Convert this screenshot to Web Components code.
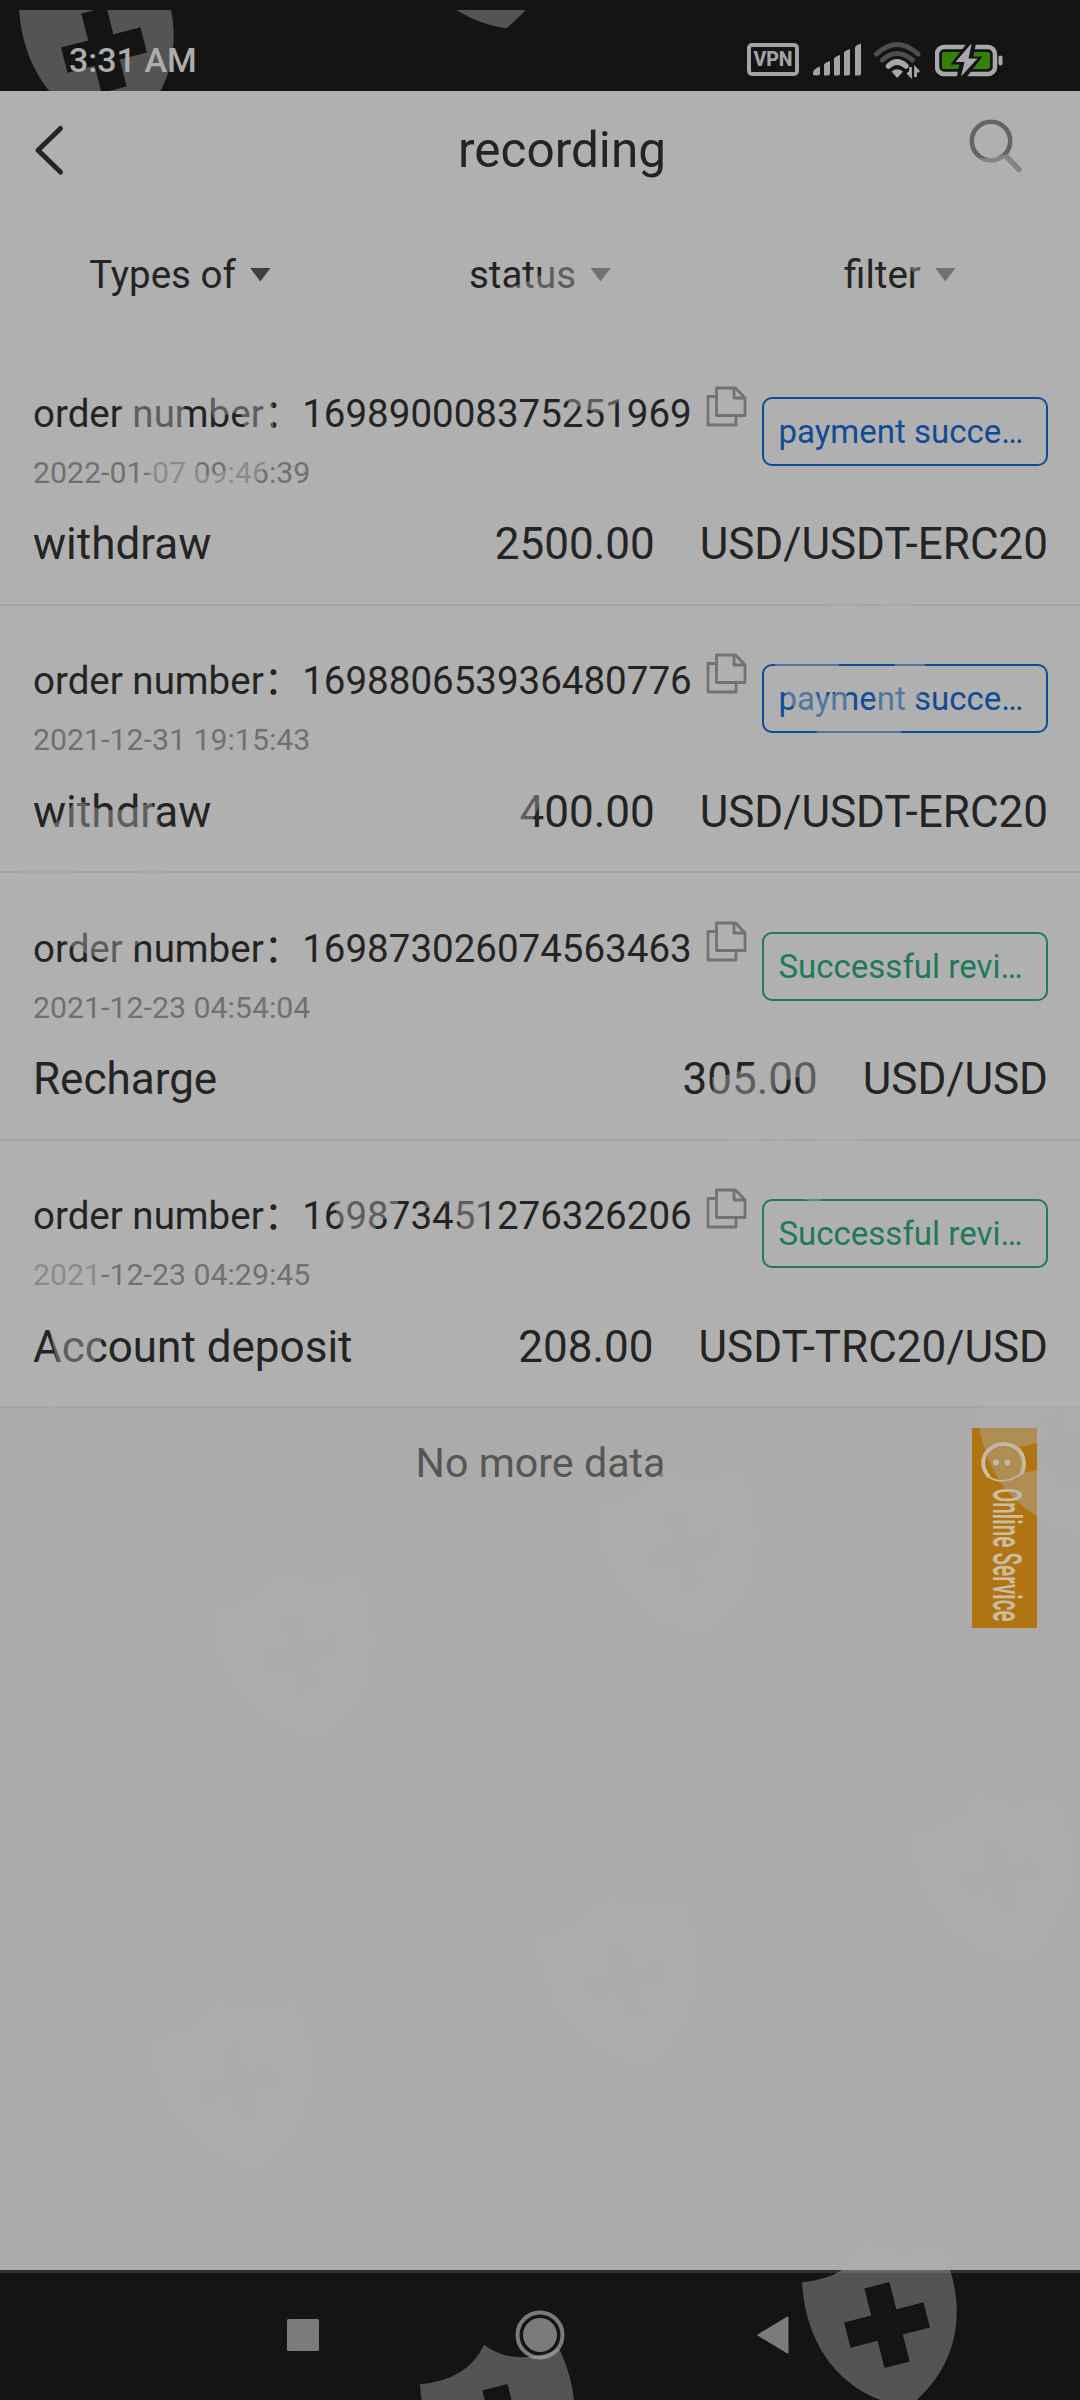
<!DOCTYPE html>
<html lang="en">
<head>
<meta charset="utf-8">
<meta name="viewport" content="width=device-width, initial-scale=1">
<title>recording</title>
<style>
    html, body {
        margin: 0;
        padding: 0;
        background: #ababab;
    }

    body {
        font-family: Roboto, "Noto Sans CJK SC", sans-serif;
    }
</style>
</head>
<body>
<record-screen>
    <status-bar slot="top" time="3:31 AM"></status-bar>
    <nav-header slot="top">recording</nav-header>
    <filter-bar slot="top">
        <filter-item tone="#3f3f3f">Types of</filter-item>
        <filter-item>status</filter-item>
        <filter-item>filter</filter-item>
    </filter-bar>

    <record-row number="169890008375251969" date="2022-01-07 09:46:39" kind="withdraw" amount="2500.00" pair="USD/USDT-ERC20">
        <status-badge slot="badge">payment succe…</status-badge>
    </record-row>
    <record-row number="169880653936480776" date="2021-12-31 19:15:43" kind="withdraw" amount="400.00" pair="USD/USDT-ERC20">
        <status-badge slot="badge">payment succe…</status-badge>
    </record-row>
    <record-row number="169873026074563463" date="2021-12-23 04:54:04" kind="Recharge" amount="305.00" pair="USD/USD">
        <status-badge slot="badge" type="success">Successful revi…</status-badge>
    </record-row>
    <record-row number="169873451276326206" date="2021-12-23 04:29:45" kind="Account deposit" amount="208.00" pair="USDT-TRC20/USD">
        <status-badge slot="badge" type="success">Successful revi…</status-badge>
    </record-row>

    <list-end slot="end">No more data</list-end>
    <system-nav slot="bottom"></system-nav>
    <online-service slot="float">Online Service</online-service>
    <shield-layer slot="float"></shield-layer>
</record-screen>

<script>
/**
 * Base class, attaches an open shadow root and renders once connected.
 */
class BaseElement extends HTMLElement {
    constructor() {
        super();
        this.attachShadow({ mode: 'open' });
    }

    connectedCallback() {
        this.shadowRoot.innerHTML = this.template();
    }

    template() {
        return '<slot></slot>';
    }
}

/**
 * Whole phone screen: top bars, list, bottom navigation, floating layers.
 */
class RecordScreen extends BaseElement {
    template() {
        return `
            <style>
                :host {
                    position: relative;
                    display: flex;
                    flex-direction: column;
                    width: 1080px;
                    height: 2400px;
                    overflow: hidden;
                    background: #ababab;
                }

                .panel {
                    background: #b0b0b0;
                }

                .rest {
                    flex: 1;
                }
            </style>
            <div class="panel">
                <slot name="top"></slot>
                <slot></slot>
            </div>
            <div class="rest"><slot name="end"></slot></div>
            <slot name="bottom"></slot>
            <slot name="float"></slot>
        `;
    }
}

/**
 * Android status bar.
 */
class StatusBar extends BaseElement {
    template() {
        return `
            <style>
                :host {
                    display: flex;
                    align-items: center;
                    justify-content: space-between;
                    box-sizing: border-box;
                    height: 91px;
                    padding: 28px 77px 0 69px;
                    background: #141414;
                    color: #acacac;
                }

                .time {
                    font-size: 34px;
                    font-weight: 500;
                    line-height: 40px;
                }

                .icons {
                    display: flex;
                    align-items: center;
                }

                .vpn {
                    box-sizing: border-box;
                    width: 52px;
                    height: 33px;
                    margin-right: 14px;
                    border: 4px solid #a3a3a6;
                    border-radius: 5px;
                    color: #a3a3a6;
                    font-size: 19.5px;
                    font-weight: 800;
                    line-height: 25px;
                    text-align: center;
                }

                .signal { margin-right: 12px; }
                .wifi { margin-right: 14px; }
                svg { display: block; }
            </style>
            <span class="time">${this.getAttribute('time')}</span>
            <div class="icons">
                <span class="vpn">VPN</span>
                <svg class="signal" width="49" height="34" viewBox="0 0 49 34" fill="#a3a3a6">
                    <path d="M0 32v-2q0-4 7-6.500v7q0 2-2 2z"/>
                    <path d="M11 32.500V22q0-2 6-4v12.500q0 2-2 2z"/>
                    <path d="M21 32.500V16q0-2 6-4v18.500q0 2-2 2z"/>
                    <path d="M31 32.500V10q0-2 6-4v24.500q0 2-2 2z"/>
                    <path d="M42 32.500V4.500q0-2 6-4v30q0 2-2 2z"/>
                </svg>
                <svg class="wifi" width="47" height="38" viewBox="0 0 47 38" fill="none">
                    <path d="M2.500 13Q23-6 44 13" stroke="#4e4e4e" stroke-width="5" stroke-linecap="round"/>
                    <path d="M8.500 19Q23 6 38.500 19" stroke="#4e4e4e" stroke-width="5" stroke-linecap="round"/>
                    <path d="M14.500 25Q23 17 32 25" stroke="#a8a8ab" stroke-width="5.500" stroke-linecap="round"/>
                    <path d="M17.500 30.500q5.500-4.500 11.500 0l-5.800 6.500z" fill="#a8a8ab"/>
                    <path d="M36.500 26v8.500l-3-3M41.500 36v-8.500l3.500 3.500" stroke="#a8a8ab" stroke-width="2.800"/>
                </svg>
                <svg width="68" height="38" viewBox="0 0 68 38">
                    <rect x="2" y="6" width="58" height="27" rx="7" fill="none" stroke="#a9a9ac" stroke-width="4.500"/>
                    <rect x="7" y="11" width="48" height="17" rx="2" fill="#348108"/>
                    <rect x="63.500" y="14.500" width="4" height="10" rx="2" fill="#a9a9ac"/>
                    <path d="M32 2L15.500 23.500H24.500L21.500 37h9.500L47.500 15.500H38.500L41 2z" fill="#141414"/>
                    <path d="M35.500 3.500L20.500 21H29.500L26 35.500L42.500 17.500H33.500L36.500 3.500z" fill="#a9a9ac"/>
                </svg>
            </div>
        `;
    }
}

/**
 * Page title with the back and search buttons.
 */
class NavHeader extends BaseElement {
    template() {
        return `
            <style>
                :host {
                    display: grid;
                    grid-template-columns: 120px 1fr 120px;
                    align-items: center;
                    height: 119px;
                    color: #242424;
                    font-size: 49.500px;
                    line-height: 60px;
                    text-align: center;
                }

                span {
                    padding: 0 0 1px 44px;
                }

                svg { display: block; }
            </style>
            <svg width="120" height="119" viewBox="0 91 120 119" fill="none" stroke="#242424" stroke-width="5" stroke-linecap="round" stroke-linejoin="round">
                <path d="M60.500 128.500L38 150.300l22.500 21.700"/>
            </svg>
            <span><slot></slot></span>
            <svg width="120" height="119" viewBox="960 91 120 119" fill="none" stroke="#646464">
                <circle cx="991" cy="141" r="19.200" stroke-width="4.600"/>
                <path d="M1005 155l14 14.500" stroke-width="5.500" stroke-linecap="round"/>
            </svg>
        `;
    }
}

class FilterBar extends BaseElement {
    template() {
        return `
            <style>
                :host {
                    display: grid;
                    grid-template-columns: repeat(3, 1fr);
                    height: 128px;
                }
            </style>
            <slot></slot>
        `;
    }
}

/**
 * One dropdown of the filter bar.
 */
class FilterItem extends BaseElement {
    template() {
        const tone = this.getAttribute('tone') || '#454545';
        return `
            <style>
                :host {
                    display: flex;
                    align-items: center;
                    justify-content: center;
                    gap: 14px;
                    height: 129px;
                    color: #242424;
                    font-size: 38.500px;
                    line-height: 50px;
                }

                i {
                    width: 21px;
                    height: 14px;
                    background: ${tone};
                    clip-path: polygon(0 0, 100% 0, 50% 100%);
                }
            </style>
            <span><slot></slot></span><i></i>
        `;
    }
}

/**
 * Outlined state label of a record.
 */
class StatusBadge extends BaseElement {
    template() {
        const color = this.getAttribute('type') === 'success' ? '#1f7a5a' : '#0f4c96';
        return `
            <style>
                :host {
                    display: block;
                    box-sizing: border-box;
                    width: 286px;
                    height: 69px;
                    padding-left: 14.500px;
                    border: 2px solid ${color};
                    border-radius: 10px;
                    color: ${color};
                    font-size: 33px;
                    line-height: 65px;
                    white-space: nowrap;
                }
            </style>
            <slot></slot>
        `;
    }
}

/**
 * One record of the list.
 */
class RecordRow extends BaseElement {
    template() {
        return `
            <style>
                :host {
                    display: block;
                    box-sizing: border-box;
                    height: 267.500px;
                    padding: 49.600px 32px 0 33px;
                    border-bottom: 2px solid #a3a3a3;
                    color: #242424;
                }

                .head, .foot, .number {
                    display: flex;
                }

                .head {
                    justify-content: space-between;
                    height: 126.500px;
                }

                .number {
                    font-size: 38.500px;
                    line-height: 52px;
                    white-space: nowrap;
                }

                .number svg {
                    margin: -2px 0 0 13px;
                }

                .date {
                    margin-top: 13px;
                    color: #707070;
                    font-size: 30.300px;
                    line-height: 40px;
                }

                ::slotted(status-badge) {
                    margin-top: 9px;
                }

                .foot {
                    font-size: 44px;
                    line-height: 60px;
                }

                .amount { margin-left: auto; }
                .pair { margin-left: 45px; }
            </style>
            <div class="head">
                <div>
                    <div class="number">
                        <span>order number：${this.getAttribute('number')}</span>
                        <svg width="42" height="42" viewBox="0 0 42 42" fill="none" stroke="#727272" stroke-width="2.800" stroke-linejoin="round">
                            <path d="M11 10.500H3v28.500h28v-9"/>
                            <path d="M11.500 2h19L40 12v17.500H11.500z"/>
                            <path d="M29 2.500V12h10.500"/>
                        </svg>
                    </div>
                    <div class="date">${this.getAttribute('date')}</div>
                </div>
                <slot name="badge"></slot>
            </div>
            <div class="foot">
                <span>${this.getAttribute('kind')}</span>
                <span class="amount">${this.getAttribute('amount')}</span>
                <span class="pair">${this.getAttribute('pair')}</span>
            </div>
        `;
    }
}

class ListEnd extends BaseElement {
    template() {
        return `
            <style>
                :host {
                    display: block;
                    padding: 30px 0 0 1px;
                    color: #565656;
                    font-size: 41.200px;
                    line-height: 50px;
                    text-align: center;
                }
            </style>
            <slot></slot>
        `;
    }
}

/**
 * Floating customer service tab.
 */
class OnlineService extends BaseElement {
    template() {
        return `
            <style>
                :host {
                    position: absolute;
                    left: 972px;
                    top: 1428px;
                    display: flex;
                    flex-direction: column;
                    align-items: center;
                    width: 65px;
                    height: 200px;
                    background: #b07412;
                    color: #cdbda0;
                }

                svg {
                    display: block;
                    flex: none;
                }

                /* condensed letters: small type stretched across the tab */
                span {
                    margin-left: 5px;
                    writing-mode: vertical-rl;
                    font-size: 20.500px;
                    font-weight: 600;
                    line-height: 26px;
                    letter-spacing: .1px;
                    white-space: nowrap;
                    transform: scaleX(1.95);
                }
            </style>
            <svg width="65" height="60" viewBox="0 0 65 60" fill="none" stroke="#cdbda0">
                <path d="M17 49Q8 38 13 27Q20 15 34 16Q51 19 52 35Q52 42 49 46" stroke-width="3.800"/>
                <path d="M17 49Q31 58 49 46" stroke-width="1.600"/>
                <circle cx="24" cy="34.500" r="3" fill="#cdbda0" stroke="none"/>
                <circle cx="35.500" cy="34.500" r="3" fill="#cdbda0" stroke="none"/>
            </svg>
            <span><slot></slot></span>
        `;
    }
}

/**
 * Android three-button navigation.
 */
class SystemNav extends BaseElement {
    template() {
        return `
            <style>
                :host {
                    display: flex;
                    align-items: center;
                    box-sizing: border-box;
                    height: 130px;
                    padding: 0 291px 3px 287px;
                    justify-content: space-between;
                    border-top: 3px solid #303030;
                    background: #141414;
                }

                .home { margin-left: 4px; }
            </style>
            <svg width="32" height="32"><rect width="32" height="32" rx="1.500" fill="#7b7b7b"/></svg>
            <svg class="home" width="50" height="50" viewBox="0 0 50 50">
                <circle cx="25" cy="25" r="22.500" fill="none" stroke="#7b7b7b" stroke-width="4"/>
                <circle cx="25" cy="25" r="17" fill="#7b7b7b"/>
            </svg>
            <svg width="32" height="38" viewBox="0 0 32 38">
                <path d="M1.500 19L30.500 1.500v35z" fill="#7b7b7b" stroke="#7b7b7b" stroke-width="2" stroke-linejoin="round"/>
            </svg>
        `;
    }
}

/**
 * Translucent shields scattered over the screen.
 */
class ShieldLayer extends BaseElement {
    template() {
        const points = [
            [104, 50], [485, -54],
            [204, 434], [584, 331], [965, 228],
            [97, 880], [477, 777], [855, 675],
            [35, 1327], [417, 1224], [797, 1120],
            [300, 1654], [684, 1551], [1062, 1450],
            [239, 2083], [625, 1980], [1000, 1877],
            [127, 2529], [505, 2427], [887, 2325]
        ];
        const shield = `
            M0-85Q24-55 71.800-62.500C84 0 62 58 0 85C-62 58-84 0-71.800-62.500Q-24-55 0-85Z
            M-13-41H13V-13H41V13H13V41H-13V13H-41V-13H-13Z`;
        const marks = points.map(([x, y]) =>
            `<path transform="translate(${x} ${y}) rotate(-14.300)" d="${shield}"/>`).join('');
        return `
            <style>
                :host {
                    position: absolute;
                    left: 0;
                    top: 10px;
                    width: 1080px;
                    height: 2390px;
                    pointer-events: none;
                }

                svg { display: block; }
            </style>
            <svg width="1080" height="2390" viewBox="0 10 1080 2390" fill="#b1b1b1" fill-opacity=".41" fill-rule="evenodd">${marks}</svg>
        `;
    }
}

customElements.define('record-screen', RecordScreen);
customElements.define('status-bar', StatusBar);
customElements.define('nav-header', NavHeader);
customElements.define('filter-bar', FilterBar);
customElements.define('filter-item', FilterItem);
customElements.define('status-badge', StatusBadge);
customElements.define('record-row', RecordRow);
customElements.define('list-end', ListEnd);
customElements.define('online-service', OnlineService);
customElements.define('system-nav', SystemNav);
customElements.define('shield-layer', ShieldLayer);
</script>
</body>
</html>
